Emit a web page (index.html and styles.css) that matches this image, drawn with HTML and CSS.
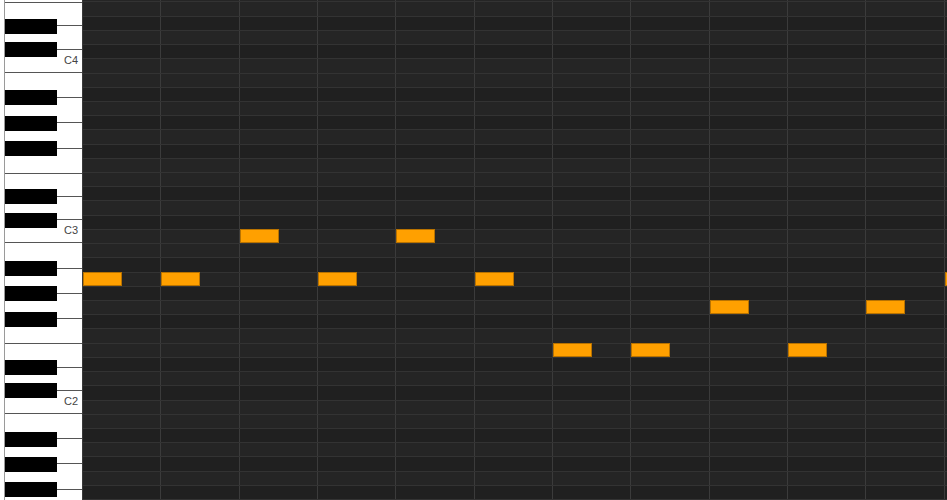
FILE: index.html
```html
<!DOCTYPE html>
<html lang="en">
<head>
    <meta charset="UTF-8">
    <meta name="viewport" content="width=device-width, initial-scale=1.0">
    <title>Piano Roll</title>
    <link rel="stylesheet" href="styles.css">
</head>
<body>
    <div class="roll">
        <div class="keys">
            <div class="key-list">
                <div class="key wide sharp"></div><!-- F4 -->
                <div class="key narrow"></div><!-- E4 -->
                <div class="key narrow sharp"></div><!-- D4 -->
                <div class="key narrow sharp"><span class="label">C4</span></div>
                <div class="key wide"></div><!-- B3 -->
                <div class="key wide sharp"></div><!-- A3 -->
                <div class="key wide sharp"></div><!-- G3 -->
                <div class="key wide sharp"></div><!-- F3 -->
                <div class="key narrow"></div><!-- E3 -->
                <div class="key narrow sharp"></div><!-- D3 -->
                <div class="key narrow sharp"><span class="label">C3</span></div>
                <div class="key wide"></div><!-- B2 -->
                <div class="key wide sharp"></div><!-- A2 -->
                <div class="key wide sharp"></div><!-- G2 -->
                <div class="key wide sharp"></div><!-- F2 -->
                <div class="key narrow"></div><!-- E2 -->
                <div class="key narrow sharp"></div><!-- D2 -->
                <div class="key narrow sharp"><span class="label">C2</span></div>
                <div class="key wide"></div><!-- B1 -->
                <div class="key wide sharp"></div><!-- A1 -->
                <div class="key wide sharp"></div><!-- G1 -->
                <div class="key wide sharp"></div><!-- F1 -->
            </div>
        </div>

        <div class="grid">
            <div class="rows">
                <div class="row"></div><!-- F4 -->
                <div class="row"></div><!-- E4 -->
                <div class="row dark"></div><!-- D#4 -->
                <div class="row"></div><!-- D4 -->
                <div class="row dark"></div><!-- C#4 -->
                <div class="row"></div><!-- C4 -->
                <div class="row"></div><!-- B3 -->
                <div class="row dark"></div><!-- A#3 -->
                <div class="row"></div><!-- A3 -->
                <div class="row dark"></div><!-- G#3 -->
                <div class="row"></div><!-- G3 -->
                <div class="row dark"></div><!-- F#3 -->
                <div class="row"></div><!-- F3 -->
                <div class="row"></div><!-- E3 -->
                <div class="row dark"></div><!-- D#3 -->
                <div class="row"></div><!-- D3 -->
                <div class="row dark"></div><!-- C#3 -->
                <div class="row"><!-- C3 -->
                    <div class="note" style="left: 156.67px"></div>
                    <div class="note" style="left: 313.33px"></div>
                </div>
                <div class="row"></div><!-- B2 -->
                <div class="row dark"></div><!-- A#2 -->
                <div class="row"><!-- A2 -->
                    <div class="note" style="left: 0px"></div>
                    <div class="note" style="left: 78.33px"></div>
                    <div class="note" style="left: 235px"></div>
                    <div class="note" style="left: 391.67px"></div>
                    <div class="note" style="left: 861.67px"></div>
                </div>
                <div class="row dark"></div><!-- G#2 -->
                <div class="row"><!-- G2 -->
                    <div class="note" style="left: 626.67px"></div>
                    <div class="note" style="left: 783.33px"></div>
                </div>
                <div class="row dark"></div><!-- F#2 -->
                <div class="row"></div><!-- F2 -->
                <div class="row"><!-- E2 -->
                    <div class="note" style="left: 470px"></div>
                    <div class="note" style="left: 548.33px"></div>
                    <div class="note" style="left: 705px"></div>
                </div>
                <div class="row dark"></div><!-- D#2 -->
                <div class="row"></div><!-- D2 -->
                <div class="row dark"></div><!-- C#2 -->
                <div class="row"></div><!-- C2 -->
                <div class="row"></div><!-- B1 -->
                <div class="row dark"></div><!-- A#1 -->
                <div class="row"></div><!-- A1 -->
                <div class="row dark"></div><!-- G#1 -->
                <div class="row"></div><!-- G1 -->
                <div class="row dark"></div><!-- F#1 -->
                <div class="row"></div><!-- F1 -->
            </div>
        </div>
    </div>
</body>
</html>
```

FILE: styles.css
```css
body {
    margin: 0;
    background-color: #FFFFFF;
    font-family: "Liberation Sans", Arial, sans-serif;
}
.roll {
    display: flex;
    height: 500px;
    overflow: hidden;
}

/* keyboard */
.keys {
    flex: none;
    width: 77px;
    margin-left: 4px;
    border-left: 1px solid #9A9A9A;
    border-right: 1px solid #3A3A3A;
    background-color: #FFFFFF;
}
.key-list {
    display: flex;
    flex-direction: column;
    margin-top: -22px;
}
.key {
    position: relative;
    flex: none;
    box-sizing: border-box;
    display: flex;
    justify-content: flex-end;
    align-items: flex-end;
    padding: 0 4px 6px 0;
    border-bottom: 1px solid #555;
}
.key.narrow {
    height: 23.13px;
}
.key.wide {
    height: 25.3px;
}
.key.sharp::before {
    content: "";
    position: absolute;
    left: 0;
    top: -7.5px;
    width: 52px;
    height: 15px;
    background-color: #000;
    z-index: 1;
}
.label {
    font-size: 11px;
    line-height: 11px;
    color: #444;
}

/* note grid */
.grid {
    flex: 1;
    background-color: #242424;
}
.rows {
    margin-top: -12.82px;
}
.row {
    position: relative;
    box-sizing: border-box;
    height: 14.22px;
    border-top: 1px solid #333;
    background-color: #252525;
    background-image: repeating-linear-gradient(90deg, transparent 0 77.33px, #3B3B3B 77.33px 78.33px);
}
.row.dark {
    background-color: #202020;
}
.note {
    position: absolute;
    top: -1px;
    bottom: 0;
    width: 39.17px;
    box-sizing: border-box;
    background-color: #FFA000;
    border: 1px solid #B87200;
}
```
